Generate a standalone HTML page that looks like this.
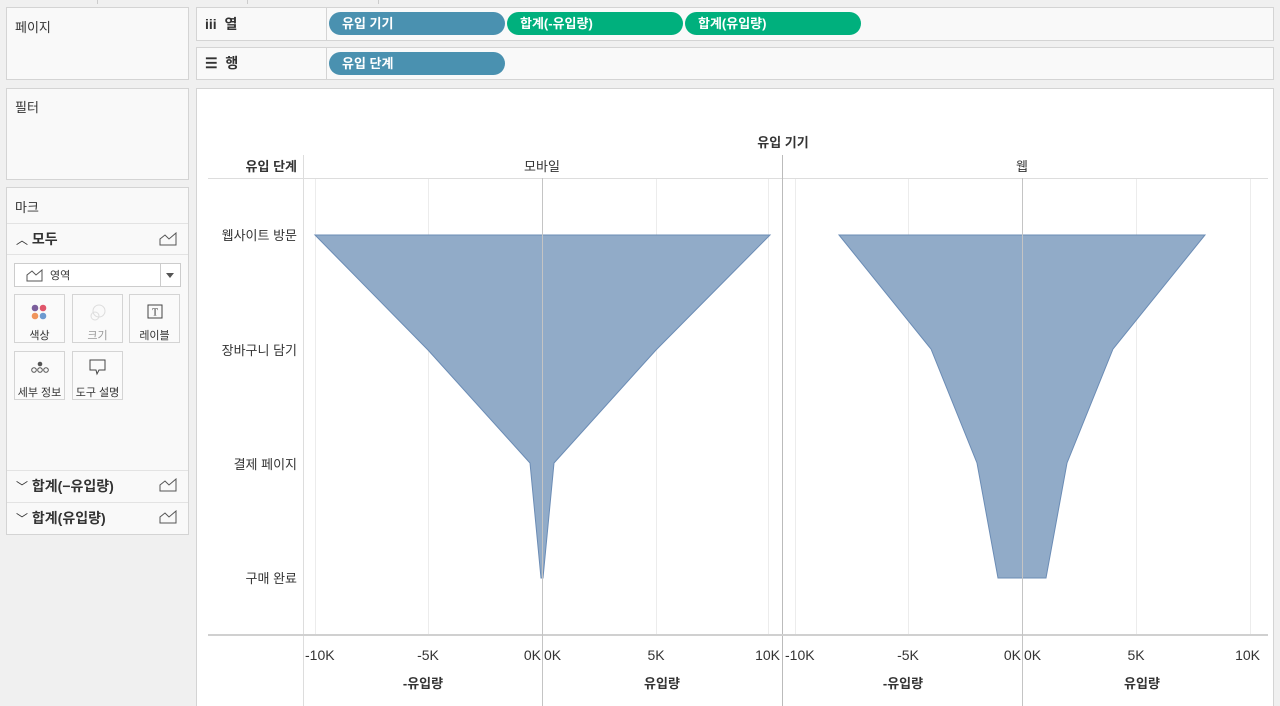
<!DOCTYPE html>
<html><head><meta charset="utf-8"><style>
*{box-sizing:border-box;margin:0;padding:0}
body{width:1280px;height:706px;background:#f0f0f0;font-family:"Liberation Sans","Noto Sans CJK KR",sans-serif;font-size:13px;color:#333;position:relative;overflow:hidden}
.a{position:absolute}
.pn{position:absolute;background:#f9f9f9;border:1px solid #d4d4d4}
.pill{position:absolute;height:23px;border-radius:12px;color:#fff;font-size:13px;line-height:23px;padding-left:13px;font-weight:bold}
.bl{background:#4a91b0}.gr{background:#00b07d}
.btn{position:absolute;width:51px;height:49px;border:1px solid #d4d4d4;background:#fafafa;font-size:11px;text-align:center}
.btn span{position:absolute;left:0;right:0;top:32px}
.t{position:absolute;font-size:13px;white-space:nowrap}
</style></head><body>
<div class="a" style="left:0;top:0;width:1280px;height:4px;background:#f0f0f0"></div>
<div class="a" style="left:97px;top:0;width:1px;height:4px;background:#ccc"></div>
<div class="a" style="left:247px;top:0;width:1px;height:4px;background:#ccc"></div>
<div class="a" style="left:378px;top:0;width:1px;height:4px;background:#ccc"></div>

<div class="pn" style="left:6px;top:7px;width:183px;height:73px"><div class="t" style="left:8px;top:9px">페이지</div></div>
<div class="pn" style="left:6px;top:88px;width:183px;height:92px"><div class="t" style="left:8px;top:8px">필터</div></div>
<div class="pn" style="left:6px;top:187px;width:183px;height:348px">
 <div class="t" style="left:8px;top:9px">마크</div>
 <div class="a" style="left:0;top:35px;width:181px;height:1px;background:#e3e3e3"></div>
 <div class="t" style="left:9px;top:41px;font-size:14px;font-weight:bold"><span style="font-weight:normal;font-size:12px">︿</span> 모두</div>
 <svg class="a" style="left:152px;top:44px" width="18" height="14"><path d="M1 13V7L6 3L10 7L17 1V13Z" fill="none" stroke="#555" stroke-width="1"/></svg>
 <div class="a" style="left:0;top:66px;width:181px;height:1px;background:#e3e3e3"></div>
 <div class="a" style="left:7px;top:75px;width:167px;height:24px;border:1px solid #ccc;background:#fff">
  <svg class="a" style="left:11px;top:5px" width="18" height="13"><path d="M1 12V6L6 2L10 6L16 1V12Z" fill="none" stroke="#555"/></svg>
  <div class="t" style="left:35px;top:3px;font-size:11px">영역</div>
  <div class="a" style="left:145px;top:0;width:1px;height:22px;background:#ccc"></div>
  <div class="a" style="left:151px;top:9px;border:4px solid transparent;border-top:5px solid #555"></div>
 </div>
 <div class="btn" style="left:7px;top:106px"><svg class="a" style="left:16px;top:9px" width="18" height="16"><circle cx="4" cy="4" r="3.3" fill="#7b5e9c"/><circle cx="12" cy="4" r="3.3" fill="#e0566b"/><circle cx="4" cy="12" r="3.3" fill="#f0955c"/><circle cx="12" cy="12" r="3.3" fill="#6d9ad0"/></svg><span>색상</span></div>
 <div class="btn" style="left:65px;top:106px;color:#999"><svg class="a" style="left:16px;top:8px" width="18" height="18"><circle cx="10" cy="8" r="6" fill="none" stroke="#ddd"/><circle cx="6" cy="13" r="4" fill="none" stroke="#ddd"/></svg><span>크기</span></div>
 <div class="btn" style="left:122px;top:106px"><svg class="a" style="left:17px;top:9px" width="16" height="15"><rect x="1" y="1" width="14" height="13" fill="none" stroke="#444"/><text x="8" y="11.5" font-size="10" text-anchor="middle" font-family="Liberation Serif" fill="#333">T</text></svg><span>레이블</span></div>
 <div class="btn" style="left:7px;top:163px"><svg class="a" style="left:15px;top:8px" width="20" height="14"><circle cx="10" cy="4" r="2.3" fill="#555"/><circle cx="4" cy="10" r="2.3" fill="none" stroke="#555"/><circle cx="10" cy="10" r="2.3" fill="none" stroke="#555"/><circle cx="16" cy="10" r="2.3" fill="none" stroke="#555"/></svg><span>세부 정보</span></div>
 <div class="btn" style="left:65px;top:163px"><svg class="a" style="left:16px;top:7px" width="18" height="17"><path d="M1 1H16V11H10L8 15L7 11H1Z" fill="none" stroke="#444"/></svg><span>도구 설명</span></div>
 <div class="a" style="left:0;top:282px;width:181px;height:1px;background:#e3e3e3"></div>
 <div class="t" style="left:9px;top:288px;font-size:14px;font-weight:bold"><span style="font-weight:normal;font-size:12px">﹀</span> 합계(−유입량)</div>
 <svg class="a" style="left:152px;top:290px" width="18" height="14"><path d="M1 13V7L6 3L10 7L17 1V13Z" fill="none" stroke="#555"/></svg>
 <div class="a" style="left:0;top:314px;width:181px;height:1px;background:#e3e3e3"></div>
 <div class="t" style="left:9px;top:320px;font-size:14px;font-weight:bold"><span style="font-weight:normal;font-size:12px">﹀</span> 합계(유입량)</div>
 <svg class="a" style="left:152px;top:322px" width="18" height="14"><path d="M1 13V7L6 3L10 7L17 1V13Z" fill="none" stroke="#555"/></svg>
</div>

<div class="pn" style="left:196px;top:7px;width:1078px;height:34px">
 <div class="t" style="left:8px;top:6px;font-weight:bold;font-size:14px">iii&nbsp; 열</div>
 <div class="a" style="left:129px;top:0;width:1px;height:32px;background:#d4d4d4"></div>
</div>
<div class="pn" style="left:196px;top:47px;width:1078px;height:33px">
 <div class="t" style="left:8px;top:5px;font-weight:bold;font-size:14px">☰&nbsp; 행</div>
 <div class="a" style="left:129px;top:0;width:1px;height:31px;background:#d4d4d4"></div>
</div>
<div class="pill bl" style="left:329px;top:12px;width:176px">유입 기기</div>
<div class="pill gr" style="left:507px;top:12px;width:176px">합계(-유입량)</div>
<div class="pill gr" style="left:685px;top:12px;width:176px">합계(유입량)</div>
<div class="pill bl" style="left:329px;top:52px;width:176px">유입 단계</div>

<div class="a" style="left:196px;top:88px;width:1078px;height:618px;background:#fff;border:1px solid #d4d4d4;border-bottom:none"></div>
<svg class="a" style="left:0;top:0" width="1280" height="706">
 <g stroke="#ececec" stroke-width="1">
  <line x1="428.5" y1="178" x2="428.5" y2="635"/><line x1="656.5" y1="178" x2="656.5" y2="635"/><line x1="315.5" y1="178" x2="315.5" y2="635"/><line x1="768.5" y1="178" x2="768.5" y2="635"/>
  <line x1="908.5" y1="178" x2="908.5" y2="635"/><line x1="1136.5" y1="178" x2="1136.5" y2="635"/><line x1="795.5" y1="178" x2="795.5" y2="635"/><line x1="1250.5" y1="178" x2="1250.5" y2="635"/>
 </g>
 <line x1="208" y1="178.5" x2="1268" y2="178.5" stroke="#ddd"/>
 <line x1="303.5" y1="155" x2="303.5" y2="706" stroke="#ddd"/>
 <line x1="782.5" y1="155" x2="782.5" y2="706" stroke="#bbb"/>
 <line x1="208" y1="635" x2="1268" y2="635" stroke="#d0d0d0" stroke-width="2"/>
 <polygon points="315,235 770,235 656,350 554,463 543,578 541,578 530,463 428,350" fill="#91abc8" stroke="#6b8cb5"/>
 <polygon points="839,235 1205,235 1113,349 1067,463 1046,578 998,578 977,463 931,349" fill="#91abc8" stroke="#6b8cb5"/>
 <line x1="542.5" y1="178" x2="542.5" y2="706" stroke="#c4c4c4"/>
 <line x1="1022.5" y1="178" x2="1022.5" y2="706" stroke="#c4c4c4"/>
 <g font-family="Liberation Sans,Noto Sans CJK KR,sans-serif" font-size="13" fill="#333">
  <text x="783" y="147" text-anchor="middle" font-weight="bold">유입 기기</text>
  <text x="297" y="171" text-anchor="end" font-weight="bold">유입 단계</text>
  <text x="542" y="171" text-anchor="middle">모바일</text>
  <text x="1022" y="171" text-anchor="middle">웹</text>
  <text x="297" y="240" text-anchor="end">웹사이트 방문</text>
  <text x="297" y="355" text-anchor="end">장바구니 담기</text>
  <text x="297" y="469" text-anchor="end">결제 페이지</text>
  <text x="297" y="583" text-anchor="end">구매 완료</text>
  <g font-size="14">
  <text x="305" y="660">-10K</text><text x="428" y="660" text-anchor="middle">-5K</text><text x="541" y="660" text-anchor="end">0K</text>
  <text x="544" y="660">0K</text><text x="656" y="660" text-anchor="middle">5K</text><text x="780" y="660" text-anchor="end">10K</text>
  <text x="785" y="660">-10K</text><text x="908" y="660" text-anchor="middle">-5K</text><text x="1021" y="660" text-anchor="end">0K</text>
  <text x="1024" y="660">0K</text><text x="1136" y="660" text-anchor="middle">5K</text><text x="1260" y="660" text-anchor="end">10K</text>
  </g>
  <text x="423" y="688" text-anchor="middle" font-weight="bold">-유입량</text>
  <text x="662" y="688" text-anchor="middle" font-weight="bold">유입량</text>
  <text x="903" y="688" text-anchor="middle" font-weight="bold">-유입량</text>
  <text x="1142" y="688" text-anchor="middle" font-weight="bold">유입량</text>
 </g>
</svg>
</body></html>
